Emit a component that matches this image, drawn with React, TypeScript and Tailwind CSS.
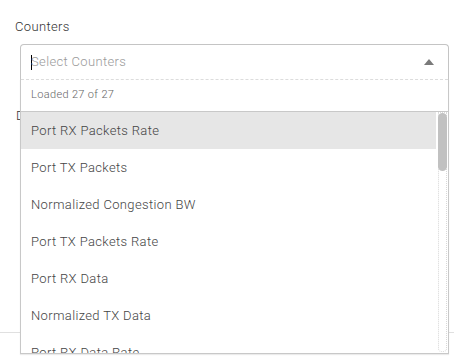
import React from "react";

const items = [
  "Port RX Packets Rate",
  "Port TX Packets",
  "Normalized Congestion BW",
  "Port TX Packets Rate",
  "Port RX Data",
  "Normalized TX Data",
  "Port RX Data Rate",
  "Port TX Data",
];

export default function App() {
  return (
    <div
      className="relative h-[361px] w-[454px] overflow-hidden bg-white font-light tracking-[0.35px] text-[#4a4a4a]"
      style={{ fontFamily: "Roboto, 'Liberation Sans', sans-serif" }}
    >
      <div className="pl-[15px] pt-[19px] text-[13px] leading-[16px] text-[#333]">Counters</div>

      <div className="ml-[20px] mr-[5px] mt-[9px]">
        <div className="relative z-10">
          {/* input */}
          <div className="flex h-[35px] items-center rounded-t-[4px] border border-b-0 border-[#c4c4c4] bg-white pl-[10px] pr-[14px]">
            <span className="mr-[-1px] h-[15px] w-px bg-black" />
            <span className="flex-1 text-[13px] text-[#9a9a9a]">Select Counters</span>
            <svg width="10" height="6" viewBox="0 0 10 6">
              <path d="M0 6 L5 0 L10 6 Z" fill="#7a7a7a" />
            </svg>
          </div>

          {/* dropdown menu */}
          <div className="absolute left-0 right-0 top-full border-x border-b border-[#c8c8c8] bg-white shadow-[0_1px_1px_rgba(0,0,0,0.08)]">
            <div className="flex h-[32px] items-center border-t border-dashed border-[#dcdcdc] pl-[10px] text-[11px] text-[#666]">
              Loaded 27 of 27
            </div>
            <div className="relative h-[242px] overflow-hidden border-t border-[#c8c8c8]">
              <div className="pr-[12px]">
                {items.map((t, i) => (
                  <div
                    key={t}
                    className={
                      i === 0
                        ? "flex h-[37px] items-center bg-[#e6e6e6] pl-[10px] text-[13px] text-[#444]"
                        : "flex h-[37px] items-center pl-[10px] text-[13px] text-[#444]"
                    }
                  >
                    {t}
                  </div>
                ))}
              </div>
              {/* scrollbar */}
              <div className="absolute bottom-[1px] right-[1px] top-0 w-[9px] rounded-b-[4px] border border-dotted border-[#d8d8d8]">
                <div className="absolute left-[-1px] right-[-1px] top-0 h-[58px] rounded-[5px] bg-[#c1c1c1]" />
              </div>
            </div>
          </div>
        </div>

        {/* underlying content */}
        <div className="ml-[-4px] pt-[29px] text-[13px] leading-[16px] text-[#333]">Display</div>
      </div>

      <div className="mt-[208px] h-px w-full bg-[#e0e0e0]" />
    </div>
  );
}
